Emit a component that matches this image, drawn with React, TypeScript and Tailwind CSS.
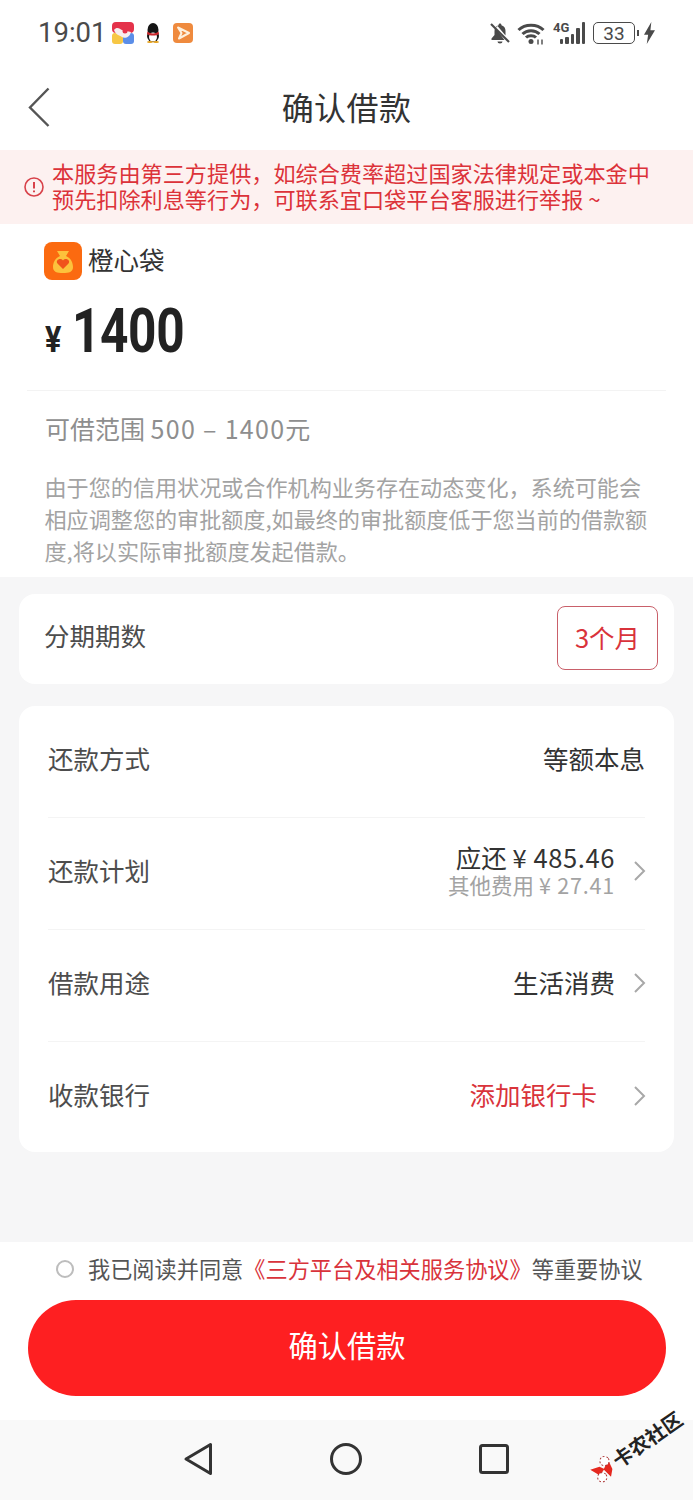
import type { ReactNode } from "react";

const cjk = "font-['Noto_Sans_CJK_SC','Noto_Sans',sans-serif]";

function StatusBar() {
  return (
    <div className="flex h-[66px] items-center justify-between pl-[38px] pr-[38px] text-[#4a4a4a]">
      <div className="flex items-center">
        <span className="font-['Roboto',sans-serif] text-[27.500px] leading-none">19:01</span>
        {/* app notification icons */}
        <svg className="ml-[6px]" width="22" height="22" viewBox="0 0 22 22">
          <rect width="22" height="11" rx="4" fill="#e4324a" />
          <rect y="11" width="11" height="11" rx="3" fill="#f7c744" />
          <rect x="11" y="11" width="11" height="11" rx="3" fill="#5b8ee8" />
          <path d="M2 8c3-4 6-1 8 0s6 1 9 2c-1 5-6 7-9 5S4 13 2 8z" fill="#f6eeee" />
          <circle cx="13" cy="9" r="2.500" fill="#e4324a" />
        </svg>
        <svg className="ml-[11px]" width="16" height="20" viewBox="0 0 16 20">
          <ellipse cx="8" cy="7" rx="5.500" ry="7" fill="#151515" />
          <ellipse cx="8" cy="13" rx="6" ry="6" fill="#151515" />
          <ellipse cx="8" cy="14" rx="4" ry="4.500" fill="#fff" />
          <path d="M2.500 8.500C5 11 11 11 13.500 8.500L14 11C11 13 5 13 2 11z" fill="#c8262b" />
          <ellipse cx="5" cy="19" rx="3" ry="1" fill="#e5a11c" />
          <ellipse cx="11" cy="19" rx="3" ry="1" fill="#e5a11c" />
        </svg>
        <svg className="ml-[12px]" width="20" height="20" viewBox="0 0 20 20">
          <rect width="20" height="20" rx="4" fill="#ef8a3e" />
          <path d="M5 4.500L16 10L6 15.500L8.500 10z" fill="none" stroke="#fdf0dd" strokeWidth="2" strokeLinejoin="round" />
        </svg>
      </div>
      <div className="flex items-center">
        {/* muted bell */}
        <svg width="20" height="22" viewBox="0 0 20 22" fill="#4a4a4a">
          <path d="M8.500 3.200C5.600 4 4.500 6.500 4.500 9v4L1.500 16.500V18h13L5.500 6z" />
          <path d="M8.500 3.200C8.500 1 11.500 1 11.500 3.200 14.500 4 15.500 6.500 15.500 9v4.500L7.500 4z" />
          <path d="M7.500 19.500h5a2.500 2 0 0 1-5 0z" />
          <path d="M1 2l18 18" stroke="#4a4a4a" strokeWidth="2.200" />
        </svg>
        {/* wifi */}
        <svg className="ml-[7px]" width="28" height="23" viewBox="0 0 28 23" fill="none" stroke="#4a4a4a" strokeWidth="3">
          <path d="M1.500 8C8 1.500 20 1.500 26.500 8" />
          <path d="M5.500 12C10 7.500 18 7.500 22.500 12" />
          <path d="M9 15.500C11.500 13 16.500 13 19 15.500" />
          <circle cx="14" cy="19.500" r="2.500" fill="#4a4a4a" stroke="none" />
          <path d="M21 17.500v5M25 17.500v5" strokeWidth="1.400" />
        </svg>
        {/* 4G signal */}
        <div className="relative ml-[8px] h-[22px] w-[32px]">
          <span className="absolute left-0 top-[-1px] font-['Roboto',sans-serif] text-[13px] font-bold leading-[13px] text-[#4a4a4a]">4G</span>
          <div className="absolute bottom-0 right-0 flex items-end gap-[2px]">
            <div className="h-[5px] w-[3.500px] rounded-[1px] bg-[#4a4a4a]" />
            <div className="h-[7px] w-[3.500px] rounded-[1px] bg-[#4a4a4a]" />
            <div className="h-[10px] w-[3.500px] rounded-[1px] bg-[#4a4a4a]" />
            <div className="h-[16px] w-[3.500px] rounded-[1px] bg-[#4a4a4a]" />
            <div className="h-[22px] w-[3.500px] rounded-[1px] bg-[#4a4a4a]" />
          </div>
        </div>
        {/* battery */}
        <div className="ml-[8px] flex h-[22px] w-[42px] items-center justify-center rounded-[5px] border-[1.500px] border-[#4a4a4a]">
          <span className="font-['Roboto',sans-serif] text-[19px] leading-none">33</span>
        </div>
        <div className="ml-[2px] h-[6px] w-[2px] bg-[#4a4a4a]" />
        <svg className="ml-[5px]" width="11" height="22" viewBox="0 0 12 24" fill="#4a4a4a">
          <path d="M8 0L0 14h4.500L3 24l9-15H7z" />
        </svg>
      </div>
    </div>
  );
}

function Row({ label, children, last = false }: { label: string; children: ReactNode; last?: boolean }) {
  return (
    <div className={`flex items-center justify-between ${last ? "h-[110px] pb-[6px]" : "h-[112px] border-b border-[#f4f4f4] pb-[8px]"}`}>
      <span className="text-[25.500px] leading-none text-[#4d4d4d]">{label}</span>
      {children}
    </div>
  );
}

function Arrow() {
  return (
    <svg className="ml-[18px] mr-[-1px] mt-[3px]" width="13" height="22" viewBox="0 0 13 22" fill="none" stroke="#a8a8a8" strokeWidth="2">
      <path d="M2 2l9 9-9 9" />
    </svg>
  );
}

export default function App() {
  return (
    <div className={`flex h-[1500px] w-[693px] flex-col overflow-hidden bg-[#f6f6f7] ${cjk}`}>
      <div className="bg-white">
        <StatusBar />
        {/* Nav */}
        <div className="relative flex h-[84px] items-center justify-center pb-[4px]">
          <svg className="absolute left-[27px] top-[21px]" width="24" height="40" viewBox="0 0 24 40" fill="none" stroke="#555" strokeWidth="2.400">
            <path d="M21.500 1.500L3 20.500L21.500 39" />
          </svg>
          <span className="text-[32px] leading-none tracking-[0.4px] text-[#333]">确认借款</span>
        </div>
      </div>

      {/* Notice */}
      <div className="flex h-[74px] items-center bg-[#fdf1f0] pb-[1px] pl-[24px]">
        <svg width="20" height="20" viewBox="0 0 20 20" fill="none" stroke="#d8424a" strokeWidth="1.600">
          <circle cx="10" cy="10" r="9" />
          <path d="M10 5v6.500M10 13.500v1.800" strokeWidth="2" />
        </svg>
        <p className="mb-[3px] ml-[8px] text-[22.150px] leading-[26px] text-[#dc3239]">
          本服务由第三方提供，如综合费率超过国家法律规定或本金中
          <br />
          预先扣除利息等行为，可联系宜口袋平台客服进行举报 ~
        </p>
      </div>

      {/* Amount */}
      <div className="h-[353px] bg-white px-[45px]">
        <div className="flex items-center pt-[18px]">
          <svg className="ml-[-1px]" width="38" height="38" viewBox="0 0 38 38">
            <rect width="38" height="38" rx="8" fill="#fb6a10" />
            <path d="M13 9h12l-3 5c5 2 7 7 7 11 0 5-4 6-10 6s-10-1-10-6c0-4 2-9 7-11z" fill="#fcc23c" />
            <path d="M19 27l-5.500-5.500c-2.500-3.500 3-6.500 5.500-3 2.500-3.500 8-.5 5.500 3z" fill="#f0531c" />
          </svg>
          <span className="mb-[4px] ml-[6px] text-[25.500px] leading-none text-[#333]">橙心袋</span>
        </div>
        <div className="mt-[20px] flex items-baseline font-['Roboto',sans-serif] font-bold leading-none text-[#222]">
          <span className="inline-block w-[27px] origin-left scale-x-[0.85] text-[36px]">¥</span>
          <span className="inline-block origin-left scale-x-[0.8] text-[62px] tracking-[-0.5px]">1400</span>
        </div>
        <div className="mx-[-18px] mt-[28px] border-t border-[#f3f3f3]" />
        <p className="mt-[19px] text-[25px] leading-[36px] text-[#8e8e8e]">
          可借范围 <span className="tracking-[1.300px]">500 – 1400</span>元
        </p>
        <p className="mt-[24px] ml-[-0.5px] w-[610px] text-[22.100px] leading-[32px] text-[#a3a3a3]">
          由于您的信用状况或合作机构业务存在动态变化，系统可能会相应调整您的审批额度,如最终的审批额度低于您当前的借款额度,将以实际审批额度发起借款。
        </p>
      </div>

      {/* Installments */}
      <div className="mx-[19px] mt-[17px] flex h-[90px] items-center justify-between rounded-[16px] bg-white pl-[25px] pr-[16px]">
        <span className="mb-[8px] text-[25.500px] leading-none text-[#4d4d4d]">分期期数</span>
        <div className="mb-[2px] flex h-[64px] w-[101px] items-center justify-center rounded-[8px] border border-[#c9606a] pb-[3px] text-[25.500px] leading-none text-[#d9333b]">
          3个月
        </div>
      </div>

      {/* Details */}
      <div className="mx-[19px] mt-[22px] rounded-[16px] bg-white px-[29px]">
        <Row label="还款方式">
          <span className="text-[25.500px] leading-none text-[#333]">等额本息</span>
        </Row>
        <Row label="还款计划">
          <div className="flex items-center">
            <div className="flex flex-col items-end">
              <span className="text-[25.500px] leading-[30px] text-[#333]">
                应还 <span className="tracking-[0.6px]">¥ 485.46</span>
              </span>
              <span className="text-[21.500px] leading-[26px] text-[#a3a3a3]">
                其他费用 <span className="tracking-[0.8px]">¥ 27.41</span>
              </span>
            </div>
            <Arrow />
          </div>
        </Row>
        <Row label="借款用途">
          <div className="flex items-center">
            <span className="text-[25.500px] leading-none text-[#333]">生活消费</span>
            <Arrow />
          </div>
        </Row>
        <Row label="收款银行" last>
          <div className="flex items-center">
            <span className="mr-[18px] text-[25.500px] leading-none text-[#d9333b]">添加银行卡</span>
            <Arrow />
          </div>
        </Row>
      </div>

      <div className="flex-1" />

      {/* Agreement + submit */}
      <div className="h-[178px] bg-white px-[28px]">
        <div className="flex h-[58px] items-center pb-[4px] pl-[28px]">
          <div className="size-[18px] rounded-full border-2 border-[#bdbdbd]" />
          <p className="mb-[2px] ml-[14px] whitespace-nowrap text-[22.200px] leading-none text-[#555]">
            我已阅读并同意
            <span className="text-[#d9333b]">《三方平台及相关服务协议》</span>
            等重要协议
          </p>
        </div>
        <button className="h-[96px] w-[638px] rounded-full bg-[#fe1f21] pb-[7px] text-[29.250px] text-white">确认借款</button>
      </div>

      {/* Android nav */}
      <div className="relative flex h-[80px] items-center justify-center gap-[117px] bg-[#f9f9f9] pb-[2px] pr-[2px]">
        <svg width="30" height="34" viewBox="0 0 30 34" fill="none" stroke="#333" strokeWidth="3">
          <path d="M27.500 2.500V31.500L3 17z" strokeLinejoin="round" />
        </svg>
        <svg width="32" height="32" viewBox="0 0 32 32" fill="none" stroke="#333" strokeWidth="3">
          <circle cx="16" cy="16" r="14.500" />
        </svg>
        <svg width="30" height="30" viewBox="0 0 30 30" fill="none" stroke="#333" strokeWidth="3">
          <rect x="1.500" y="1.500" width="27" height="27" rx="2" />
        </svg>
        {/* watermark */}
        <div className="absolute left-[593px] top-[44px] flex w-max origin-left -rotate-[35deg] items-center">
          <svg width="26" height="26" viewBox="0 0 28 28">
            <path d="M2 6l10 3 3 5-8 3zM14 14l10-6-2 11-6 6z" fill="#e5281f" />
            <circle cx="8" cy="20" r="5" fill="#fff" stroke="#a33" strokeWidth="1" strokeDasharray="2 2" />
            <circle cx="20" cy="7" r="5" fill="#fff" stroke="#a33" strokeWidth="1" strokeDasharray="2 2" />
          </svg>
          <span className="whitespace-nowrap text-[20px] font-bold leading-none text-[#222]">卡农社区</span>
        </div>
      </div>
    </div>
  );
}
